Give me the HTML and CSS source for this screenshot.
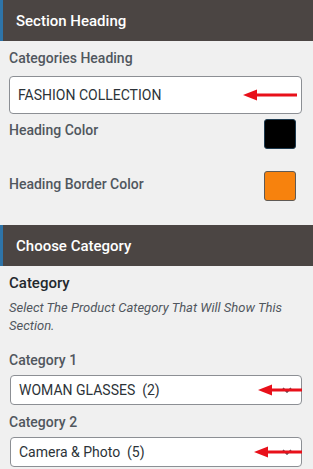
FILE: index.html
```html
<!DOCTYPE html>
<html lang="en">
<head>
    <meta charset="UTF-8">
    <meta name="viewport" content="width=device-width, initial-scale=1.0">
    <title>Section Settings</title>
    <link rel="stylesheet" href="styles.css">
</head>
<body>
    <div class="panel">
        <h2 class="section-title">Section Heading</h2>
        <div class="section-body">
            <label class="field-label" for="cat-heading">Categories Heading</label>
            <div class="field-wrap">
                <input class="text-input" type="text" id="cat-heading" value="FASHION COLLECTION">
                <svg class="pointer pointer-input" width="54" height="12" viewBox="0 0 54 12">
                    <polygon points="0,6 14,0.5 14,11.5" fill="#e8101a"/>
                    <rect x="12" y="4.5" width="42" height="3" fill="#e8101a"/>
                </svg>
            </div>
            <div class="color-row">
                <span class="field-label">Heading Color</span>
                <span class="swatch swatch-black"></span>
            </div>
            <div class="color-row">
                <span class="field-label">Heading Border Color</span>
                <span class="swatch swatch-orange"></span>
            </div>
        </div>

        <h2 class="section-title">Choose Category</h2>
        <div class="section-body">
            <div class="group-title">Category</div>
            <p class="group-desc">Select The Product Category That Will Show This Section.</p>

            <div class="field-label">Category 1</div>
            <div class="select-box">
                <span>WOMAN GLASSES&nbsp; (2)</span>
                <svg class="chevron" width="10" height="6" viewBox="0 0 10 6">
                    <polyline points="1,1 5,5 9,1" fill="none" stroke="#50575e" stroke-width="1.6"/>
                </svg>
                <svg class="pointer pointer-sel1" width="44" height="12" viewBox="0 0 44 12">
                    <polygon points="0,6 14,0.5 14,11.5" fill="#e8101a"/>
                    <rect x="12" y="4.5" width="32" height="3" fill="#e8101a"/>
                </svg>
            </div>

            <div class="field-label">Category 2</div>
            <div class="select-box">
                <span>Camera &amp; Photo&nbsp; (5)</span>
                <svg class="chevron" width="10" height="6" viewBox="0 0 10 6">
                    <polyline points="1,1 5,5 9,1" fill="none" stroke="#50575e" stroke-width="1.6"/>
                </svg>
                <svg class="pointer pointer-sel2" width="48" height="12" viewBox="0 0 48 12">
                    <polygon points="0,6 14,0.5 14,11.5" fill="#e8101a"/>
                    <rect x="12" y="4.5" width="36" height="3" fill="#e8101a"/>
                </svg>
            </div>
        </div>
    </div>
</body>
</html>
```

FILE: styles.css
```css
/* General Reset */
* {
    margin: 0;
    padding: 0;
    box-sizing: border-box;
    font-family: Roboto, 'Liberation Sans', sans-serif;
}

body {
    background: #f0f0f0;
    color: #50575e;
    overflow: hidden;
}

.section-title {
    height: 41px;
    display: flex;
    align-items: center;
    padding-left: 13px;
    background: #4b4543;
    border-left: 3px solid #2e74a8;
    color: #fff;
    font-size: 15px;
    font-weight: 500;
}

.section-body {
    padding: 7px 11px 24px 9px;
}

.field-label {
    display: block;
    font-size: 14px;
    font-weight: 500;
    line-height: 20px;
    color: #50575e;
}

.field-wrap {
    position: relative;
    margin: 8px 0 5px;
}

.text-input {
    width: 100%;
    height: 38px;
    padding: 0 8px;
    border: 1px solid #8c8f94;
    border-radius: 4px;
    background: #fff;
    font-size: 14px;
    color: #2c3338;
}

.pointer {
    position: absolute;
    top: 50%;
    transform: translateY(-50%);
}

.pointer-input {
    left: 234px;
}

.color-row {
    display: flex;
    justify-content: space-between;
    align-items: flex-start;
    margin-bottom: 22px;
}

.color-row:last-child {
    margin-bottom: 0;
}

.color-row .field-label {
    padding-top: 1px;
}

.color-row:last-child .field-label {
    padding-top: 3px;
}

.swatch {
    flex: none;
    width: 32px;
    height: 30px;
    margin-right: 6px;
    border-radius: 3px;
    border: 1px solid #50575e;
}

.swatch-black {
    background: #000;
    border-color: #1d3a4f;
}

.swatch-orange {
    background: #f7820d;
    border-color: #5f5a55;
}

.group-title {
    font-size: 15px;
    font-weight: 500;
    line-height: 20px;
    color: #23282d;
}

.group-desc {
    margin: 6px 0 15px;
    font-size: 13px;
    font-style: italic;
    line-height: 18px;
    color: #50575e;
}

.select-box {
    position: relative;
    display: flex;
    align-items: center;
    justify-content: space-between;
    height: 30px;
    margin: 5px 0 7px 1px;
    padding: 0 9px 0 8px;
    border: 1px solid #8c8f94;
    border-radius: 4px;
    background: #fff;
    font-size: 14px;
    color: #2c3338;
}

.pointer-sel1 {
    left: 247px;
}

.pointer-sel2 {
    left: 243px;
}
```
